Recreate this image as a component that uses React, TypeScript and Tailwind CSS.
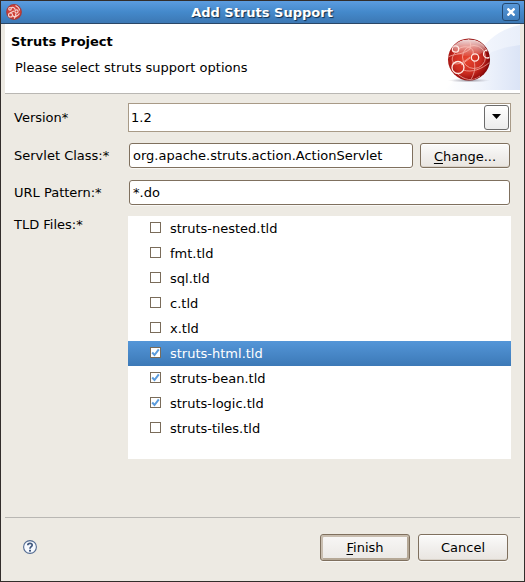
import React, { useState } from "react";

type Tld = { name: string; checked: boolean };

const initialFiles: Tld[] = [
  { name: "struts-nested.tld", checked: false },
  { name: "fmt.tld", checked: false },
  { name: "sql.tld", checked: false },
  { name: "c.tld", checked: false },
  { name: "x.tld", checked: false },
  { name: "struts-html.tld", checked: true },
  { name: "struts-bean.tld", checked: true },
  { name: "struts-logic.tld", checked: true },
  { name: "struts-tiles.tld", checked: false },
];

const field =
  "h-[25px] w-full min-w-0 rounded-[3px] border border-[#7f705e] bg-white px-[3px] text-black shadow-[0_1px_0_#f9f8f5] outline-none";
const button =
  "rounded-[3px] border border-[#7f705e] bg-linear-to-b from-[#fbfbfa] via-[#f1efed] to-[#e9e5e0] text-black shadow-[0_1px_0_#f9f8f5,inset_0_1px_0_#ffffff,inset_0_-1px_0_#d9d2c9]";

function SmallGlobe() {
  return (
    <svg className="size-4" viewBox="0 0 16 16" aria-hidden="true">
      <circle cx="8" cy="8" r="7.900" fill="#a93a38" />
      <circle cx="8" cy="7.800" r="6.800" fill="#cf4038" />
      <g fill="none" stroke="#f6d5d1" strokeWidth="1.100">
        <circle cx="10.500" cy="7.500" r="1.600" />
        <circle cx="4.500" cy="11" r="2" />
        <circle cx="4" cy="4.800" r="1.300" />
        <path d="M5 4C7 2.500 9.500 4 9 6M9.500 1.500c3 1.500 4 3 4 5M6.500 11.500c2 2 5 1 7-2M4 9l4-2M9.500 9.500c1 2 0 3.500-1.500 5" />
      </g>
    </svg>
  );
}

function HeaderArt() {
  return (
    <svg className="block h-[66px] w-[75px]" viewBox="0 0 75 66" aria-hidden="true">
      <defs>
        <linearGradient id="wave" x1="0" x2="1">
          <stop offset="0" stopColor="#ffffff" />
          <stop offset="0.5" stopColor="#f0f4fc" />
          <stop offset="1" stopColor="#dbe4f6" />
        </linearGradient>
        <linearGradient id="haze" x1="0" x2="1">
          <stop offset="0" stopColor="#ffffff" />
          <stop offset="0.5" stopColor="#f3f6fd" />
          <stop offset="1" stopColor="#e9effa" />
        </linearGradient>
        <radialGradient id="ball" cx="0.45" cy="0.5" r="0.55">
          <stop offset="0" stopColor="#e8452f" />
          <stop offset="0.6" stopColor="#cb2d22" />
          <stop offset="0.88" stopColor="#9c100f" />
          <stop offset="1" stopColor="#760506" />
        </radialGradient>
        <linearGradient id="gloss" x1="0" y1="0" x2="0" y2="1">
          <stop offset="0" stopColor="#ffffff" stopOpacity="0.85" />
          <stop offset="1" stopColor="#ffffff" stopOpacity="0.05" />
        </linearGradient>
        <radialGradient id="shade">
          <stop offset="0" stopColor="#6d6570" stopOpacity="0.7" />
          <stop offset="1" stopColor="#9090a0" stopOpacity="0" />
        </radialGradient>
        <clipPath id="disc">
          <circle cx="24" cy="35.500" r="20.500" />
        </clipPath>
      </defs>
      <path d="M0 66L30 34C40 17 55 5 75 1V66Z" fill="url(#haze)" />
      <path d="M0 66L36 34C46 28 58 23 75 21V66Z" fill="url(#wave)" />
      <ellipse cx="24" cy="56.500" rx="21" ry="2" fill="url(#shade)" />
      <circle cx="24" cy="35.500" r="21" fill="url(#ball)" />
      <g clipPath="url(#disc)">
        <ellipse cx="24" cy="24" rx="16" ry="8.500" fill="url(#gloss)" />
        <g fill="none" stroke="#ffcfc5" strokeWidth="0.900" opacity="0.700">
          <circle cx="29" cy="33" r="11.500" />
          <path d="M13 25C21 20 30 24 28 30M23 15c3 3 3 7 2 10M29 37c2 7 0 14-4 20M25 34L16 41M10 29c-4 5-3 8-1 10M18 46c9 3 19-1 27-8M13 50c6 6 15 8 22 2M3 33c8-4 15-2 22-8M31 17c7 3 10 7 11 11M7 39c7 3 13-2 18-6" />
        </g>
        <g fill="none" stroke="#ffe9e4" strokeWidth="1.300">
          <circle cx="30" cy="33.500" r="3.700" />
          <circle cx="13" cy="43.500" r="6" />
          <circle cx="10.500" cy="25" r="3.200" />
          <circle cx="42.500" cy="30" r="4" />
        </g>
      </g>
    </svg>
  );
}

function TldRow({ file, selected, onToggle }: { file: Tld; selected: boolean; onToggle: () => void }) {
  return (
    <li
      className={
        selected
          ? "h-[25px] bg-linear-to-b from-[#5496d8] to-[#3c79b7] text-white"
          : "h-[25px] text-black"
      }
    >
      <label className="flex h-full items-center pl-[22px]">
        <span className="mr-[9px] mb-[2px] grid size-[11px]">
          <input
            type="checkbox"
            checked={file.checked}
            onChange={onToggle}
            className="peer col-start-1 row-start-1 size-[11px] appearance-none border border-[#7a6c5a] bg-white"
          />
          <svg
            className="pointer-events-none invisible col-start-1 row-start-1 size-[11px] peer-checked:visible"
            viewBox="0 0 11 11"
            aria-hidden="true"
          >
            <path d="M2.200 5.500L4.500 8L8.800 2.300" fill="none" stroke="#5a9bdc" strokeWidth="2" />
          </svg>
        </span>
        {file.name}
      </label>
    </li>
  );
}

export default function App() {
  const [files, setFiles] = useState(initialFiles);
  const toggle = (index: number) =>
    setFiles(files.map((f, i) => (i === index ? { ...f, checked: !f.checked } : f)));

  return (
    <div className="flex min-h-screen flex-col border border-[#322d2b] bg-[#edeae3] font-['DejaVu_Sans',sans-serif] text-[13px] leading-4 text-black">
      <div className="flex h-[23px] items-center border-b border-[#2b4766] bg-linear-to-b from-[#5b9ce0] via-[#4489cb] to-[#3c78b4] pr-1 pl-[5px]">
        <SmallGlobe />
        <h1 className="flex-1 pt-[2px] text-center font-bold text-white [text-shadow:1px_1px_1px_#122c48]">
          Add Struts Support
        </h1>
        <button
          type="button"
          aria-label="Close"
          className="grid size-[18px] place-items-center rounded-[3px] border border-[#24486f] bg-linear-to-b from-[#5797d8] to-[#3e7dbc]"
        >
          <svg className="size-2" viewBox="0 0 8 8" aria-hidden="true">
            <path d="M0.500 0.500L7.500 7.500M7.500 0.500L0.500 7.500" stroke="#ffffff" strokeWidth="2.400" />
          </svg>
        </button>
      </div>

      <header className="mx-1 flex h-[70px] items-start justify-between border-b border-[#b9b7b3] bg-white">
        <div className="pt-[10px] pl-[6px]">
          <h2 className="font-bold">Struts Project</h2>
          <p className="mt-[10px] pl-1">Please select struts support options</p>
        </div>
        <HeaderArt />
      </header>

      <form
        className="grid grid-cols-[114px_1fr] items-center pt-[9px] pr-[13px] pb-4 pl-[13px]"
        onSubmit={(e) => e.preventDefault()}
      >
        <label htmlFor="version">Version*</label>
        <div className="relative">
          <select
            id="version"
            className="block h-[29px] w-full appearance-none border border-[#a89a87] bg-white pl-[2px] text-black outline-none"
          >
            <option>1.2</option>
          </select>
          <span className="pointer-events-none absolute top-[2px] right-[2px] grid size-[25px] place-items-center rounded-[3px] border border-[#6b6b6b] bg-linear-to-b from-white to-[#ececec]">
            <svg className="mb-[2px] h-[5px] w-[9px]" viewBox="0 0 9 5" aria-hidden="true">
              <path d="M0 0H9L4.500 5Z" fill="#000000" />
            </svg>
          </span>
        </div>

        <label htmlFor="servlet" className="mt-[11px]">Servlet Class:*</label>
        <div className="mt-[11px] flex gap-[7px] px-px">
          <input id="servlet" className={field} defaultValue="org.apache.struts.action.ActionServlet" />
          <button type="button" className={`${button} h-[25px] w-[90px] shrink-0 pt-[2px]`}>
            <span className="underline underline-offset-2">C</span>hange...
          </button>
        </div>

        <label htmlFor="pattern" className="mt-3">URL Pattern:*</label>
        <div className="mt-3 px-px">
          <input id="pattern" className={`${field} block`} defaultValue="*.do" />
        </div>

        <span id="tld-label" className="mt-3 self-start">TLD Files:*</span>
        <ul aria-labelledby="tld-label" className="mt-[11px] bg-white pb-[18px]">
          {files.map((file, i) => (
            <TldRow
              key={file.name}
              file={file}
              selected={file.name === "struts-html.tld"}
              onToggle={() => toggle(i)}
            />
          ))}
        </ul>
      </form>

      <footer className="mx-1 mt-auto flex h-16 items-start gap-2 border-t border-[#b9b7b3] pt-4 pr-3 pl-[18px]">
        <button type="button" aria-label="Help" className="mt-[6px] mr-auto">
          <svg className="block size-[14px]" viewBox="0 0 14 14" aria-hidden="true">
            <circle cx="7" cy="7" r="6.400" fill="#f7faff" stroke="#536b91" strokeWidth="1.100" />
            <path d="M4.800 5.300C4.800 2.700 9.200 2.700 9.200 5.100C9.200 6.700 7 6.700 7 8.800" fill="none" stroke="#40587e" strokeWidth="1.700" />
            <rect x="6" y="9.800" width="2" height="1.800" fill="#40587e" />
          </svg>
        </button>
        <button
          type="submit"
          className="h-[27px] w-[90px] rounded-[3px] border border-[#7f705e] bg-linear-to-b from-[#f8f7f6] to-[#ebe8e4] text-black shadow-[0_1px_0_#f9f8f5,inset_1px_1px_0_1px_#c9beb0,inset_-1px_-1px_0_1px_#b5a896]"
        >
          <span className="underline underline-offset-2">F</span>inish
        </button>
        <button type="button" className={`${button} h-[27px] w-[90px]`}>
          Cancel
        </button>
      </footer>
    </div>
  );
}
